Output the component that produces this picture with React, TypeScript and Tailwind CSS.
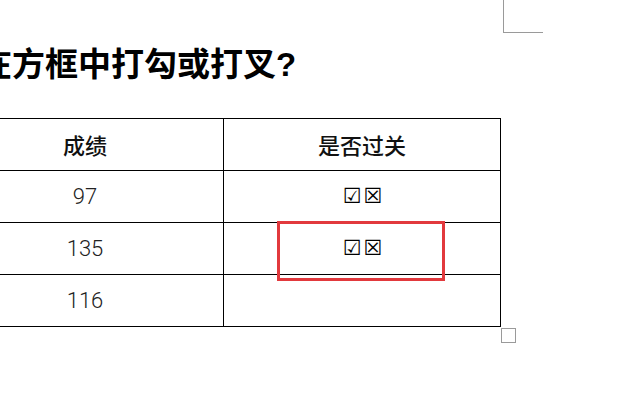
import React from "react";

const cjk = { fontFamily: '"Noto Sans CJK SC", "Noto Sans", sans-serif' };

function Row({
  left,
  right,
  header,
  first,
}: {
  left: string;
  right: React.ReactNode;
  header?: boolean;
  first?: boolean;
}) {
  return (
    <div className={`flex ${first ? "h-[51px]" : "h-[52px] border-t border-black"}`}>
      <div className="w-[277px] border-r border-black flex items-center justify-center">
        {header ? (
          <span className="text-[22px] font-medium text-[#111]" style={cjk}>
            {left}
          </span>
        ) : (
          <span className="text-[22px] font-light text-[#222] font-['Roboto',sans-serif]">{left}</span>
        )}
      </div>
      <div className="w-[276px] flex items-center justify-center">{right}</div>
    </div>
  );
}

function Boxes({ bold }: { bold?: boolean }) {
  return (
    <span className="flex items-center gap-[2px] pl-[1px] text-[21px] leading-none text-black font-['DejaVu_Sans',sans-serif]">
      <span>☑</span>
      <span className={bold ? "font-bold" : ""}>☒</span>
    </span>
  );
}

export default function App() {
  return (
    <div className="relative w-[624px] h-[403px] bg-white overflow-hidden">
      <h1
        className="ml-[-21px] pt-[48px] text-[33px] leading-[33px] font-bold text-black whitespace-nowrap"
        style={{ fontFamily: '"Liberation Sans", "Noto Sans CJK SC", sans-serif' }}
      >
        在方框中打勾或打叉?
      </h1>
      <div className="ml-[-54px] mt-[37px] w-[555px] border border-black">
        <Row first header left="成绩" right={<span className="text-[22px] font-medium text-[#111]" style={cjk}>是否过关</span>} />
        <Row left="97" right={<Boxes />} />
        <Row left="135" right={<Boxes bold />} />
        <Row left="116" right={null} />
      </div>

      {/* selection highlight */}
      <div className="absolute left-[277px] top-[221px] w-[168px] h-[60px] border-[3px] border-[#e2393d]" />
      {/* page corner mark */}
      <div className="absolute left-[503px] top-0 w-[40px] h-[33px] border-l border-b border-[#9a9a9a]" />
      {/* table resize handle */}
      <div className="absolute left-[501px] top-[328px] w-[15px] h-[15px] border border-[#9a9a9a] bg-white" />
    </div>
  );
}
